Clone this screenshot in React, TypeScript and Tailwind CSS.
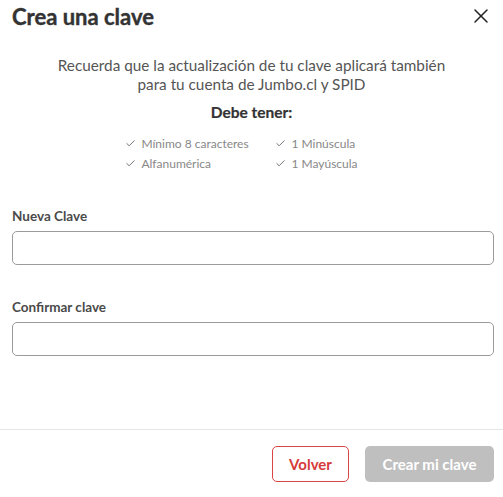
import { X, Check } from 'lucide-react';

const reqs = [
  ['Mínimo 8 caracteres', '1 Minúscula'],
  ['Alfanumérica', '1 Mayúscula'],
];

function Field({ label }: { label: string }) {
  return (
    <div className="flex flex-col">
      <label className="mb-[6px] text-[13.5px] font-bold leading-[18px] text-[#4a4a4a]">{label}</label>
      <input
        type="password"
        className="h-[34px] w-full rounded-[5px] border border-[#9b9b9b] bg-white px-3 outline-none"
      />
    </div>
  );
}

export default function App() {
  return (
    <div
      className="flex h-[497px] w-[503px] flex-col bg-white"
      style={{ fontFamily: 'Lato, "Noto Sans", sans-serif' }}
    >
      <div className="flex items-start justify-between pl-[12px] pr-[10px] pt-[2px]">
        <h1 className="text-[22px] font-bold leading-[30px] text-[#333] [-webkit-text-stroke:0.4px_#333]">
          Crea una clave
        </h1>
        <button className="mt-[2px] text-[#222]">
          <X className="h-[24px] w-[24px]" strokeWidth={1.5} />
        </button>
      </div>

      <div className="mt-[24px] flex flex-col items-center px-[12px] text-center">
        <p className="text-[15.3px] leading-[19px] text-[#555]">
          Recuerda que la actualización de tu clave aplicará también
          <br />
          para tu cuenta de Jumbo.cl y SPID
        </p>
        <p className="mt-[8px] text-[15.5px] font-bold leading-[20px] text-[#333] [-webkit-text-stroke:0.2px_#333]">
          Debe tener:
        </p>
        <div className="mr-[20px] mt-[12px] grid grid-cols-[150px_auto] gap-y-[1px] text-left text-[12px] leading-[19px] text-[#888]">
          {reqs.flat().map((r) => (
            <div key={r} className="flex items-center gap-[5px]">
              <Check className="h-[11px] w-[11px] text-[#666]" strokeWidth={2} />
              <span>{r}</span>
            </div>
          ))}
        </div>
      </div>

      <div className="mt-[34px] flex flex-col gap-[33px] pl-[12px] pr-[9px]">
        <Field label="Nueva Clave" />
        <Field label="Confirmar clave" />
      </div>

      <div className="mt-auto border-t border-[#e6e6e6] px-[9px] pb-[15px] pt-[16px]">
        <div className="flex justify-end gap-[16px]">
          <button className="h-[36px] w-[77px] rounded-[5px] border border-[#d94545] text-[15px] font-bold text-[#d63b3b]">
            Volver
          </button>
          <button className="h-[36px] w-[129px] rounded-[5px] bg-[#bfbfbf] text-[15px] font-bold text-white">
            Crear mi clave
          </button>
        </div>
      </div>
    </div>
  );
}
